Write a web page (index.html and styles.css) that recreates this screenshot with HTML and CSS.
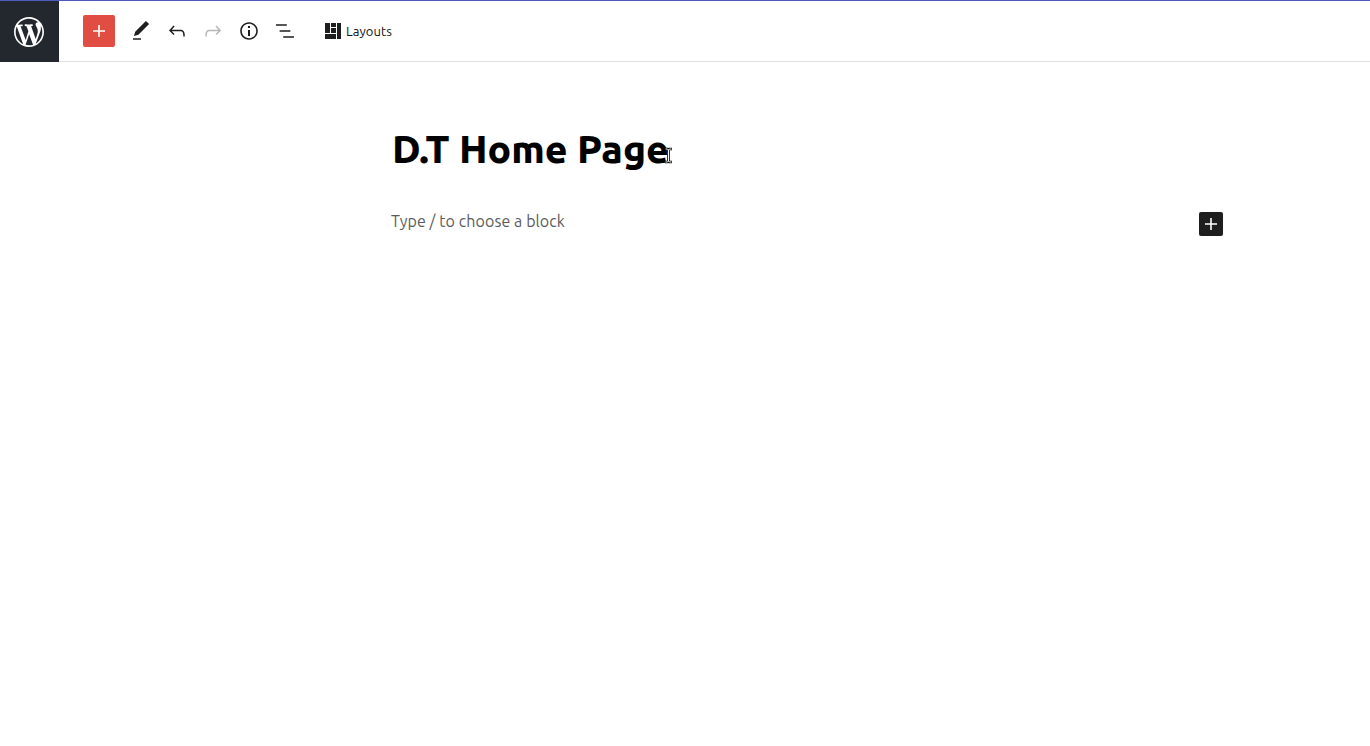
FILE: index.html
```html
<!DOCTYPE html>
<html lang="en">
<head>
<meta charset="utf-8">
<title>Edit Page</title>
<link rel="stylesheet" href="styles.css">
</head>
<body>
<header class="header">
  <a class="home">
    <svg width="36" height="36" viewBox="-2 -2 24 24"><path d="M20 10c0-5.51-4.49-10-10-10C4.48 0 0 4.49 0 10c0 5.52 4.48 10 10 10 5.51 0 10-4.48 10-10zM7.78 15.37L4.37 6.22c.55-.02 1.17-.08 1.17-.08.5-.06.44-1.13-.06-1.11 0 0-1.45.11-2.37.11-.18 0-.37 0-.58-.01C4.12 2.69 6.87 1.11 10 1.11c2.33 0 4.45.87 6.05 2.34-.68-.11-1.65.39-1.65 1.58 0 .74.45 1.36.9 2.1.35.61.55 1.36.55 2.46 0 1.49-1.4 5-1.4 5l-3.03-8.37c.54-.02.82-.17.82-.17.5-.05.44-1.25-.06-1.22 0 0-1.44.12-2.38.12-.87 0-2.33-.12-2.33-.12-.5-.03-.56 1.2-.06 1.22l.92.08 1.26 3.41zM17.41 10c.24-.64.74-1.87.43-4.25.7 1.29 1.05 2.71 1.05 4.25 0 3.29-1.73 6.24-4.4 7.78.97-2.59 1.94-5.2 2.92-7.78zM6.1 18.09C3.12 16.65 1.11 13.53 1.11 10c0-1.3.23-2.48.72-3.59C3.25 10.3 4.67 14.2 6.1 18.09zm4.03-6.63l2.58 6.98c-.86.29-1.76.45-2.71.45-.79 0-1.57-.11-2.29-.33.81-2.38 1.62-4.74 2.42-7.1z"/></svg>
  </a>
  <nav class="toolbar">
    <button class="tool add"><svg width="24" height="24" viewBox="0 0 24 24"><path d="M18 11.2h-5.2V6h-1.6v5.2H6v1.6h5.2V18h1.6v-5.2H18z"/></svg></button>
    <button class="tool edit"><svg width="24" height="24" viewBox="0 0 24 24"><path d="M20.1 5.1L16.9 2 6.2 12.7l-1.3 4.4 4.5-1.3L20.1 5.1zM4 20.8h8v-1.5H4v1.5z"/></svg></button>
    <button class="tool"><svg width="24" height="24" viewBox="0 0 24 24"><path d="M18.3 11.7c-.6-.6-1.4-.9-2.3-.9H6.7l2.9-3.3-1.1-1-4.5 5L8.5 16l1-1-2.7-2.7H16c.5 0 .9.2 1.3.5 1 1 1 3.4 1 4.5v.3h1.5v-.2c0-1.5 0-4.3-1.5-5.7z"/></svg></button>
    <button class="tool disabled"><svg width="24" height="24" viewBox="0 0 24 24"><path d="M15.6 6.5l-1.1 1 2.9 3.3H8c-.9 0-1.7.3-2.3.9-1.4 1.5-1.4 4.2-1.4 5.6v.2h1.5v-.3c0-1.1 0-3.5 1-4.5.3-.3.7-.5 1.3-.5h9.2L14.5 15l1.1 1.1 4.6-4.6-4.6-5z"/></svg></button>
    <button class="tool"><svg width="24" height="24" viewBox="0 0 24 24"><path d="M12 3.2c-4.8 0-8.8 3.9-8.8 8.8 0 4.8 3.9 8.8 8.8 8.8 4.8 0 8.8-3.9 8.8-8.8 0-4.8-4-8.8-8.8-8.8zm0 16c-4 0-7.2-3.3-7.2-7.2C4.8 8 8 4.8 12 4.8s7.2 3.3 7.2 7.2c0 4-3.2 7.2-7.2 7.2zM11 17h2v-6h-2v6zm0-8h2V7h-2v2z"/></svg></button>
    <button class="tool"><svg width="24" height="24" viewBox="0 0 24 24"><path d="M13.8 5.2H3v1.5h10.8V5.2zm-3.6 12v1.5H21v-1.5H10.2zm7.2-6H6.6v1.5h10.8v-1.5z"/></svg></button>
    <button class="layouts">
      <svg width="16" height="16" viewBox="0 0 16 16"><path d="M0 0h5v10H0zM6 0h5v4H6zM6 5h5v5H6zM0 11h11v5H0zM12 0h4v16h-4z"/></svg>
      <span class="layouts-label">Layouts</span>
    </button>
  </nav>
</header>
<main class="editor">
  <h1 class="title"><span class="title-text">D.T Home Page</span>
    <svg class="cursor" width="9" height="17" viewBox="0 0 9 17"><path class="cursor-edge" d="M1 2h2.500l1 1 1-1H8M4.500 3v11M1 15h2.500l1-1 1 1H8"/><path class="cursor-core" d="M1.5 2h2l1 1 1-1h2M4.5 3v11M1.5 15h2l1-1 1 1h2"/></svg>
  </h1>
  <div class="block">
    <p class="prompt">Type / to choose a block</p>
    <button class="inserter"><svg width="24" height="24" viewBox="0 0 24 24"><path d="M18 11.2h-5.2V6h-1.6v5.2H6v1.6h5.2V18h1.6v-5.2H18z"/></svg></button>
  </div>
</main>
</body>
</html>
```
FILE: styles.css
```css
* { box-sizing: border-box; }
body {
  margin: 0;
  min-height: 746px;
  border-top: 1px solid #4f5bc0;
  background: #fff;
  color: #1e1e1e;
  font-family: Ubuntu, "Noto Sans", sans-serif;
}
svg { display: block; fill: currentColor; }
button { padding: 0; border: 0; background: none; color: inherit; font: inherit; }
.header { display: flex; height: 61px; border-bottom: 1px solid #e0e0e0; }
.home {
  display: flex;
  align-items: center;
  width: 59px;
  height: 61px;
  padding-left: 11px;
  background: #23282e;
  color: #fff;
}
.toolbar { display: flex; align-items: center; gap: 4px; padding-left: 24px; }
.tool { display: flex; align-items: center; justify-content: center; width: 32px; height: 32px; }
.add { margin-right: 6px; border-radius: 2px; background: #e14d43; color: #fff; }
.disabled { color: #b8b8b8; }
.layouts { display: flex; align-items: center; gap: 5px; margin-left: 20px; }
.layouts-label { color: #111; font-size: 13px; line-height: 16px; letter-spacing: 0.1px; }
.editor { width: 840px; margin-left: 391px; padding-top: 61px; }
.title {
  position: relative;
  width: 290px;
  margin: 0;
  padding-left: 1px;
  color: #000;
  font-size: 39px;
  font-weight: 800;
  line-height: 52px;
  white-space: nowrap;
}
.cursor { position: absolute; left: 273px; top: 24px; fill: none; }
.cursor-edge { stroke: #000; stroke-width: 2.6; }
.cursor-core { stroke: #fff; stroke-width: 1; }
.block { display: flex; justify-content: space-between; width: 832px; margin-top: 34px; }
.prompt { margin: 0; color: #5c5c5c; font-size: 16px; line-height: 24px; letter-spacing: 0.08px; }
.inserter { width: 24px; height: 24px; margin-top: 3px; border-radius: 2px; background: #1e1e1e; color: #fff; }
```
